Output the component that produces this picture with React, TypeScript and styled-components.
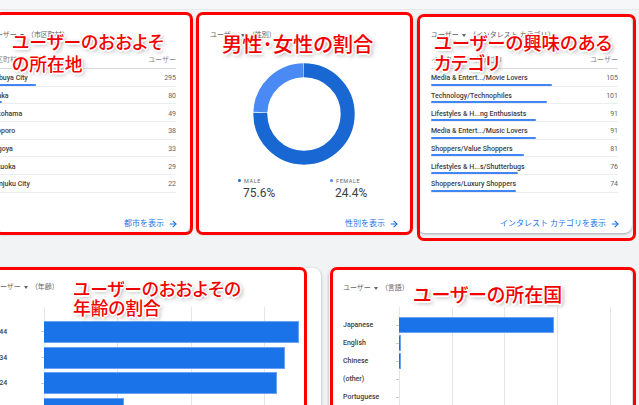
import React from "react";
import styled, { createGlobalStyle } from "styled-components";
import { ArrowRight } from "lucide-react";

const Global = createGlobalStyle`
  html, body { margin: 0; padding: 0; background: #f1f3f4; }
  #root { width: 639px; height: 405px; }
`;

const Page = styled.div`
  width: 639px;
  height: 405px;
  overflow: hidden;
  background: #f1f3f4;
  font-family: Roboto, "Noto Sans CJK JP", sans-serif;
  color: #3c4043;
`;

const TopStrip = styled.div`
  height: 9px;
  background: #f6f7f8;
  border-bottom: 1px solid #e6e8ea;
`;

const Board = styled.div`
  margin-left: -25px;
  padding-top: 4px;
  display: flex;
  flex-direction: column;
  gap: 35px;
`;

const TopRow = styled.div`
  display: grid;
  grid-template-columns: repeat(3, 215px);
  column-gap: 6px;
  height: 219px;
`;

const BottomRow = styled.div`
  display: grid;
  grid-template-columns: 340px 303px;
  column-gap: 8px;
  margin-left: 6px;
  height: 200px;
`;

const Card = styled.section<{ $pt?: number; $pl?: number }>`
  position: relative;
  box-sizing: border-box;
  background: #fff;
  border-radius: 8px;
  box-shadow: 0 1px 2px rgba(60, 64, 67, 0.28), 0 1px 3px 1px rgba(60, 64, 67, 0.12);
  display: flex;
  flex-direction: column;
  padding: ${(p) => p.$pt ?? 16}px 14px 4px ${(p) => p.$pl ?? 14}px;
  min-width: 0;
`;

const Heading = styled.div`
  display: flex;
  align-items: center;
  gap: 3px;
  font-size: 7px;
  line-height: 10px;
  color: #5f6368;
  white-space: nowrap;
`;

const Caret = styled.span`
  width: 0;
  height: 0;
  border-left: 2.5px solid transparent;
  border-right: 2.5px solid transparent;
  border-top: 3px solid #5f6368;
`;

const ColumnHead = styled.div`
  display: flex;
  justify-content: space-between;
  margin-top: 15px;
  padding-bottom: 3px;
  border-bottom: 1px solid #dadce0;
  font-size: 7px;
  line-height: 10px;
  color: #80868b;
  white-space: nowrap;
`;

const Row = styled.div`
  box-sizing: border-box;
  height: 17.7px;
  padding-top: 4px;
  border-bottom: 1px solid #ebedef;
  display: flex;
  flex-direction: column;
`;

const RowLine = styled.div`
  flex: 1;
  display: flex;
  align-items: center;
  justify-content: space-between;
  font-size: 7px;
  white-space: nowrap;
`;

const RowLabel = styled.span`
  font-weight: 500;
  color: #3c4043;
`;

const RowValue = styled.span`
  color: #5f6368;
`;

const Bar = styled.div`
  height: 2px;
  background: #4285f4;
  border-radius: 1px;
`;

const Footer = styled.div`
  margin-top: auto;
  margin-right: -2px;
  display: flex;
  justify-content: flex-end;
  align-items: center;
  gap: 4px;
  font-size: 8px;
  line-height: 10px;
  color: #1a73e8;
  white-space: nowrap;
`;

const DonutWrap = styled.div`
  display: flex;
  justify-content: center;
  margin-top: 22.7px;
`;

const Legend = styled.div`
  display: grid;
  grid-template-columns: 92px 92px;
  margin: 12px 0 0 28px;
`;

const LegendKey = styled.div<{ $color: string }>`
  display: flex;
  align-items: center;
  gap: 3px;
  font-size: 5.5px;
  line-height: 8px;
  letter-spacing: 0.6px;
  color: #5f6368;
  &::before {
    content: "";
    width: 3px;
    height: 3px;
    border-radius: 50%;
    background: ${(p) => p.$color};
  }
`;

const LegendValue = styled.div`
  margin-top: 1px;
  padding-left: 5px;
  font-size: 12px;
  line-height: 14px;
  color: #3c4043;
`;

const Chart = styled.div<{ $labelWidth: number; $top: number; $shift?: number }>`
  display: grid;
  grid-template-columns: ${(p) => p.$labelWidth}px 1fr;
  margin-top: ${(p) => p.$top}px;
  margin-left: ${(p) => -(p.$shift ?? 0)}px;
  flex: 1;
`;

const LabelCol = styled.div<{ $pad: number }>`
  padding-top: ${(p) => p.$pad}px;
`;

const AxisLabel = styled.div<{ $h: number }>`
  height: ${(p) => p.$h}px;
  display: flex;
  align-items: center;
  justify-content: space-between;
  font-size: 7px;
  font-weight: 500;
  color: #3c4043;
  white-space: nowrap;
  &::after {
    content: "";
    width: 3px;
    height: 1px;
    background: #c8cbd0;
  }
`;

const Plot = styled.div<{ $pad: number; $step: number }>`
  padding-top: ${(p) => p.$pad}px;
  background-image: repeating-linear-gradient(
    to right,
    #e3e5e8 0,
    #e3e5e8 1px,
    transparent 1px,
    transparent ${(p) => p.$step}px
  );
`;

const PlotRow = styled.div<{ $h: number }>`
  height: ${(p) => p.$h}px;
  display: flex;
  align-items: center;
`;

const HBar = styled.div<{ $h: number }>`
  box-sizing: border-box;
  height: ${(p) => p.$h}px;
  background: #1a73e8;
  border: 1px solid #6aa1f2;
  border-left: none;
`;

/* red hand-drawn frames and captions laid over the cards */
const Frame = styled.div<{ $inset: string }>`
  position: absolute;
  inset: ${(p) => p.$inset};
  border: 3px solid #ff0000;
  border-radius: 7px;
  pointer-events: none;
  z-index: 2;
`;

const Callout = styled.div<{ $top: number; $left: number; $size: number; $lh: number }>`
  position: absolute;
  top: ${(p) => p.$top}px;
  left: ${(p) => p.$left}px;
  z-index: 3;
  font-family: "Noto Sans CJK JP", sans-serif;
  font-feature-settings: "palt";
  font-weight: 500;
  font-size: ${(p) => p.$size}px;
  line-height: ${(p) => p.$lh}px;
  color: #f20000;
  white-space: nowrap;
  text-shadow: -1.5px 0 0 #fff, 1.5px 0 0 #fff, 0 -1.5px 0 #fff, 0 1.5px 0 #fff,
    -1px -1px 0 #fff, 1px -1px 0 #fff, -1px 1px 0 #fff, 1px 1px 0 #fff,
    2px 2px 4px rgba(0, 0, 0, 0.45);
`;

type Item = { label: string; value: number; bar: number };

const cities: Item[] = [
  { label: "Shibuya City", value: 295, bar: 47 },
  { label: "Osaka", value: 80, bar: 13 },
  { label: "Yokohama", value: 49, bar: 8 },
  { label: "Sapporo", value: 38, bar: 6 },
  { label: "Nagoya", value: 33, bar: 5 },
  { label: "Fukuoka", value: 29, bar: 5 },
  { label: "Shinjuku City", value: 22, bar: 4 },
];

const interests: Item[] = [
  { label: "Media & Entert.../Movie Lovers", value: 105, bar: 121 },
  { label: "Technology/Technophiles", value: 101, bar: 116 },
  { label: "Lifestyles & H...ng Enthusiasts", value: 91, bar: 105 },
  { label: "Media & Entert.../Music Lovers", value: 91, bar: 105 },
  { label: "Shoppers/Value Shoppers", value: 81, bar: 93 },
  { label: "Lifestyles & H...s/Shutterbugs", value: 76, bar: 87 },
  { label: "Shoppers/Luxury Shoppers", value: 74, bar: 85 },
];

const ages = [
  { label: "35-44", w: 255 },
  { label: "25-34", w: 241 },
  { label: "18-24", w: 233 },
  { label: "45-54", w: 80 },
  { label: "55-64", w: 40 },
];

const languages = [
  { label: "Japanese", w: 155 },
  { label: "English", w: 2 },
  { label: "Chinese", w: 1.5 },
  { label: "(other)", w: 0 },
  { label: "Portuguese", w: 0 },
];

function TableCard({
  dimension,
  column,
  rows,
  link,
}: {
  dimension: string;
  column: string;
  rows: Item[];
  link: string;
}) {
  return (
    <>
      <Heading>
        ユーザー <Caret /> （{dimension}）
      </Heading>
      <ColumnHead>
        <span>{column}</span>
        <span>ユーザー</span>
      </ColumnHead>
      {rows.map((r) => (
        <Row key={r.label}>
          <RowLine>
            <RowLabel>{r.label}</RowLabel>
            <RowValue>{r.value}</RowValue>
          </RowLine>
          <Bar style={{ width: r.bar }} />
        </Row>
      ))}
      <Footer>
        {link}
        <ArrowRight size={10} strokeWidth={2.6} />
      </Footer>
    </>
  );
}

function Donut({ male }: { male: number }) {
  const r = 43.7;
  const c = 2 * Math.PI * r;
  const gap = 0.9;
  const m = (male / 100) * c;
  const f = c - m;
  return (
    <svg width="102" height="102" viewBox="0 0 102 102">
      <g transform="rotate(-90 51 51)">
        <circle
          cx="51"
          cy="51"
          r={r}
          fill="none"
          stroke="#1967d2"
          strokeWidth="14"
          strokeDasharray={`${m - gap} ${c}`}
        />
        <circle
          cx="51"
          cy="51"
          r={r}
          fill="none"
          stroke="#4a8af4"
          strokeWidth="14"
          strokeDasharray={`${f - gap} ${c}`}
          strokeDashoffset={-m}
        />
      </g>
    </svg>
  );
}

export default function App() {
  return (
    <Page>
      <Global />
      <TopStrip />
      <Board>
        <TopRow>
          <Card>
            <TableCard dimension="市区町村" column="市区町村" rows={cities} link="都市を表示" />
            <Frame $inset="-2px -3px -2px 20px" />
            <Callout $top={15.5} $left={37} $size={17.8} $lh={22}>
              ユーザーのおおよそ
              <br />
              の所在地
            </Callout>
          </Card>

          <Card>
            <Heading>
              ユーザー <Caret /> （性別）
            </Heading>
            <DonutWrap>
              <Donut male={75.6} />
            </DonutWrap>
            <Legend>
              <div>
                <LegendKey $color="#1967d2">MALE</LegendKey>
                <LegendValue>75.6%</LegendValue>
              </div>
              <div>
                <LegendKey $color="#4a8af4">FEMALE</LegendKey>
                <LegendValue>24.4%</LegendValue>
              </div>
            </Legend>
            <Footer>
              性別を表示
              <ArrowRight size={10} strokeWidth={2.6} />
            </Footer>
            <Frame $inset="-2px -2px -2px 0" />
            <Callout $top={16.5} $left={26} $size={20.3} $lh={24}>
              男性･女性の割合
            </Callout>
          </Card>

          <Card>
            <TableCard
              dimension="インタレスト カテゴリ"
              column="インタレスト カテゴリ"
              rows={interests}
              link="インタレスト カテゴリを表示"
            />
            <Frame $inset="0 -4px -8px 0" />
            <Callout $top={17.5} $left={17} $size={18.4} $lh={20}>
              ユーザーの興味のある
              <br />
              カテゴリ
            </Callout>
          </Card>
        </TopRow>

        <BottomRow>
          <Card $pt={14} $pl={12}>
            <Heading>
              ユーザー <Caret /> （年齢）
            </Heading>
            <Chart $labelWidth={55} $top={15} $shift={4}>
              <LabelCol $pad={12}>
                {ages.map((a) => (
                  <AxisLabel key={a.label} $h={25.7}>
                    {a.label}
                  </AxisLabel>
                ))}
              </LabelCol>
              <Plot $pad={12} $step={73.33}>
                {ages.map((a) => (
                  <PlotRow key={a.label} $h={25.7}>
                    <HBar $h={22} style={{ width: a.w }} />
                  </PlotRow>
                ))}
              </Plot>
            </Chart>
            <Frame $inset="-1px 14px -20px -20px" />
            <Callout $top={10.75} $left={92} $size={17.7} $lh={19.5}>
              ユーザーのおおよその
              <br />
              年齢の割合
            </Callout>
          </Card>

          <Card $pt={15}>
            <Heading>
              ユーザー <Caret /> （言語）
            </Heading>
            <Chart $labelWidth={56} $top={14}>
              <LabelCol $pad={9}>
                {languages.map((l) => (
                  <AxisLabel key={l.label} $h={18}>
                    {l.label}
                  </AxisLabel>
                ))}
              </LabelCol>
              <Plot $pad={9} $step={52.7}>
                {languages.map((l) => (
                  <PlotRow key={l.label} $h={18}>
                    {l.w > 0 && <HBar $h={16} style={{ width: l.w }} />}
                  </PlotRow>
                ))}
              </Plot>
            </Chart>
            <Frame $inset="-1px -4px -20px 1px" />
            <Callout $top={14.5} $left={84} $size={19} $lh={22}>
              ユーザーの所在国
            </Callout>
          </Card>
        </BottomRow>
      </Board>
    </Page>
  );
}
